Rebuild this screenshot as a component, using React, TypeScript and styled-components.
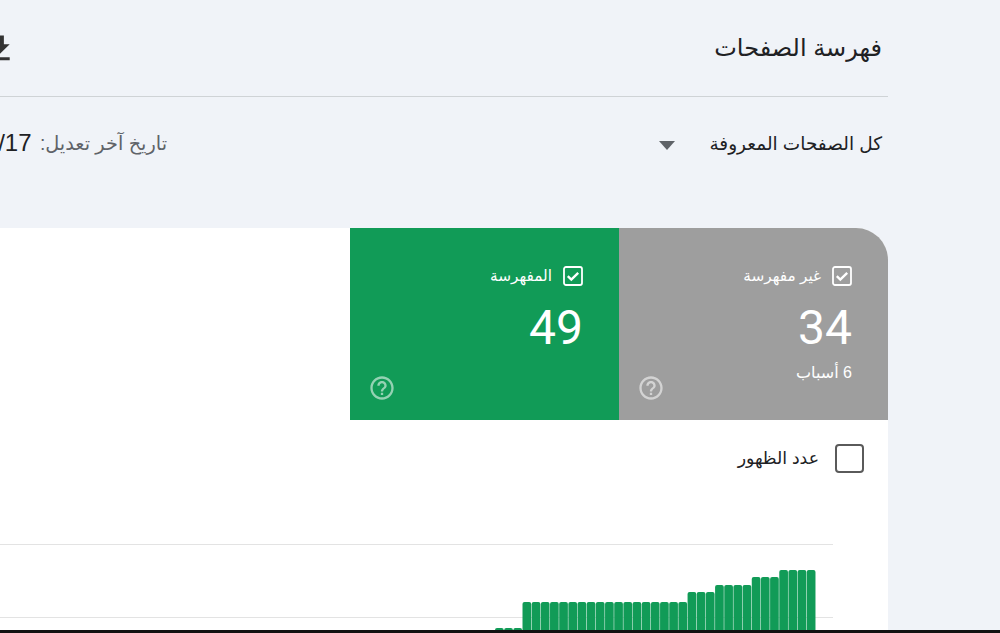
import React from "react";
import styled, { createGlobalStyle } from "styled-components";

const Global = createGlobalStyle`
  html, body { margin: 0; padding: 0; width: 1000px; height: 633px; overflow: hidden; background: #f0f3f8; }
  #root { width: 1000px; height: 633px; }
`;

const Page = styled.div`
  direction: rtl;
  width: 1000px;
  height: 633px;
  overflow: hidden;
  display: flex;
  flex-direction: column;
  background: #f0f3f8;
  font-family: "Liberation Sans", "DejaVu Sans", sans-serif;
  color: #202124;
`;

const Outer = styled.div`
  flex: 1;
  display: flex;
  min-height: 0;
  padding-right: 112px;
`;

const Main = styled.main`
  width: 888px;
  flex: none;
  display: flex;
  flex-direction: column;
  min-height: 0;
`;

const Header = styled.header`
  height: 96px;
  box-sizing: content-box;
  border-bottom: 1px solid #cfd3d6;
  display: flex;
  align-items: center;
  justify-content: space-between;
  padding-right: 6px;
`;

const Title = styled.h1`
  margin: 0;
  font-size: 24px;
  font-weight: 400;
  color: #202124;
`;

const DownloadIcon = styled.svg`
  width: 35px;
  height: 35px;
  margin-left: -18px;
  color: #333;
  flex: none;
`;

const FilterRow = styled.div`
  height: 131px;
  box-sizing: border-box;
  padding: 36px 6px 0 0;
  display: flex;
  justify-content: space-between;
  align-items: flex-start;
`;

const Dropdown = styled.div`
  display: flex;
  align-items: center;
  gap: 34px;
  height: 24px;
  font-size: 18.5px;
  color: #202124;
`;

const DropdownText = styled.span`
  margin-bottom: 2px;
`;

const Caret = styled.span`
  width: 0;
  height: 0;
  border-left: 8.5px solid transparent;
  border-right: 8.5px solid transparent;
  border-top: 9px solid #5f6368;
`;

const LastUpdated = styled.div`
  width: 167px;
  height: 24px;
  line-height: 20px;
  white-space: nowrap;
  font-size: 19.3px;
  color: #5f6368;
`;

const DateValue = styled.span`
  margin-right: 3px;
  color: #202124;
  font-size: 24px;
  font-family: "Liberation Sans", sans-serif;
  vertical-align: -1px;
`;

const Card = styled.section`
  flex: 1;
  min-height: 0;
  background: #fff;
  border-top-right-radius: 32px;
  overflow: hidden;
  display: flex;
  flex-direction: column;
`;

const Tabs = styled.div`
  display: flex;
  height: 192px;
  flex: none;
`;

const Tab = styled.div<{ $bg: string }>`
  width: 269px;
  box-sizing: border-box;
  background: ${(p) => p.$bg};
  color: #fff;
  padding: 38px 36px 18px 18px;
  display: flex;
  flex-direction: column;
`;

const TabLabel = styled.div`
  display: flex;
  align-items: center;
  gap: 11px;
  height: 20px;
  font-size: 15.3px;
`;

const TabCheck = styled.svg`
  width: 20px;
  height: 20px;
  flex: none;
`;

const TabValue = styled.div`
  margin-top: 18px;
  font-family: Roboto, sans-serif;
  font-size: 48px;
  line-height: 48px;
`;

const TabNote = styled.div`
  margin: 13px 0 -12px;
  font-size: 16px;
  line-height: 16px;
  color: #fff;
`;

const HelpIcon = styled.svg`
  width: 28px;
  height: 28px;
  flex: none;
  margin-top: auto;
  align-self: flex-end;
  opacity: 0.55;
`;

const MetricRow = styled.div`
  display: flex;
  align-items: center;
  gap: 16px;
  padding: 24px 24px 0 0;
  height: 28px;
  flex: none;
  font-size: 17.3px;
  color: #202124;
`;

const MetricBox = styled.span`
  width: 29px;
  height: 29px;
  box-sizing: border-box;
  border: 2.5px solid #5a5a5a;
  border-radius: 4px;
`;

const Chart = styled.svg`
  display: block;
  margin-top: auto;
  width: 888px;
  height: 130px;
  flex: none;
`;

const Footer = styled.footer`
  height: 3px;
  flex: none;
  background: #111;
`;

const levels: [number, number][] = [
  [3, 628],
  [18, 602],
  [3, 592],
  [4, 585],
  [3, 577],
  [4, 570],
];

const PITCH = 9.17;
const BASE = 495;
const bars: { x: number; top: number }[] = [];
{
  let i = 0;
  for (const [count, top] of levels) {
    for (let n = 0; n < count; n++) {
      bars.push({ x: BASE + i * PITCH, top });
      i++;
    }
  }
}

const Check = () => (
  <TabCheck viewBox="0 0 20 20" fill="none">
    <rect x="1" y="1" width="18" height="18" rx="2" stroke="#fff" strokeWidth="1.8" />
    <path d="M4.8 10.2l3.5 3.3L15.2 6.8" stroke="#fff" strokeWidth="2.4" />
  </TabCheck>
);

const Help = () => (
  <HelpIcon viewBox="0 0 24 24" fill="#fff">
    <path d="M11 18h2v-2h-2v2zm1-16C6.48 2 2 6.48 2 12s4.48 10 10 10 10-4.48 10-10S17.52 2 12 2zm0 18c-4.41 0-8-3.59-8-8s3.59-8 8-8 8 3.59 8 8-3.59 8-8 8zm0-14c-2.21 0-4 1.79-4 4h2c0-1.1.9-2 2-2s2 .9 2 2c0 2-3 1.75-3 5h2c0-2.25 3-2.5 3-5 0-2.21-1.79-4-4-4z" />
  </HelpIcon>
);

export default function App() {
  return (
    <Page>
      <Global />
      <Outer>
        <Main>
          <Header>
            <Title>فهرسة الصفحات</Title>
            <DownloadIcon viewBox="0 0 24 24" fill="currentColor">
              <path d="M19 9h-4V3H9v6H5l7 7 7-7zM5 18v2h14v-2H5z" />
            </DownloadIcon>
          </Header>
          <FilterRow>
            <Dropdown>
              <DropdownText>كل الصفحات المعروفة</DropdownText>
              <Caret />
            </Dropdown>
            <LastUpdated>
              تاريخ آخر تعديل: <DateValue dir="ltr">10/7/17</DateValue>
            </LastUpdated>
          </FilterRow>
          <Card>
            <Tabs>
              <Tab $bg="#9e9e9e">
                <TabLabel>
                  <Check />
                  <span>غير مفهرسة</span>
                </TabLabel>
                <TabValue>34</TabValue>
                <TabNote>6 أسباب</TabNote>
                <Help />
              </Tab>
              <Tab $bg="#119b57">
                <TabLabel>
                  <Check />
                  <span>المفهرسة</span>
                </TabLabel>
                <TabValue>49</TabValue>
                <Help />
              </Tab>
            </Tabs>
            <MetricRow>
              <MetricBox />
              <span>عدد الظهور</span>
            </MetricRow>
            <Chart viewBox="0 500 888 130">
              <line x1="0" x2="833" y1="544.5" y2="544.5" stroke="#e3e3e3" />
              <line x1="0" x2="833" y1="617.5" y2="617.5" stroke="#e3e3e3" />
              {bars.map((b) => (
                <path
                  key={b.x}
                  d={`M${b.x} 630V${b.top + 2}q0-2 2-2h4.7q2 0 2 2V630z`}
                  fill="#119b57"
                />
              ))}
            </Chart>
          </Card>
        </Main>
      </Outer>
      <Footer />
    </Page>
  );
}
